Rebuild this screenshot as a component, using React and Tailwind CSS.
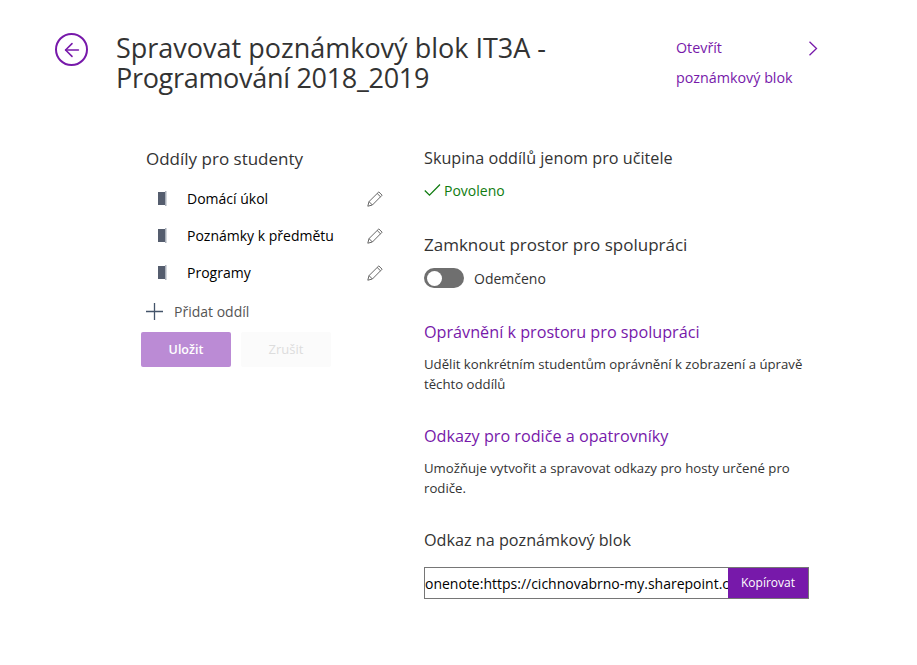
import { ArrowLeft } from 'lucide-react';

const sections = ['Domácí úkol', 'Poznámky k předmětu', 'Programy'];

function SectionIcon() {
  return (
    <svg width="9" height="15" viewBox="0 0 9 15" className="shrink-0">
      <rect x="0" y="1" width="7" height="13" fill="#555d6e" />
      <rect x="7" y="0" width="1.5" height="15" fill="#aab0ba" />
    </svg>
  );
}

function EditIcon() {
  return (
    <svg width="16" height="16" viewBox="0 0 16 16" fill="none" stroke="#666" strokeWidth="1" className="shrink-0">
      <path d="M0.8 15.2 L2 10.6 L11.8 0.9 L15.1 4.2 L5.4 14 Z" />
      <path d="M2 10.6 L5.4 14 M10.2 2.5 L13.5 5.8" />
    </svg>
  );
}

export default function App() {
  return (
    <div className="w-[917px] h-[665px] bg-white overflow-hidden font-['Open_Sans',sans-serif] text-[#333]">
      {/* Header */}
      <div className="flex pl-[55px] pt-[33px] h-[112px]">
        <div className="w-[33px] h-[33px] rounded-full border-2 border-[#7719aa] flex items-center justify-center shrink-0">
          <ArrowLeft className="w-[22px] h-[22px] text-[#7719aa]" strokeWidth={1.7} />
        </div>
        <h1 className="ml-[28px] w-[520px] text-[27px] leading-[30px] font-normal text-[#333]">
          Spravovat poznámkový blok IT3A -<br />
          <span className="tracking-[-0.3px]">Programování 2018_2019</span>
        </h1>
        <div className="ml-[40px] w-[142px] text-[14.3px] text-[#7719aa] leading-[32px] -mt-[1px]">
          <div className="flex items-center justify-between">
            <span>Otevřít</span>
            <svg width="10" height="15" viewBox="0 0 10 15" fill="none" stroke="#7719aa" strokeWidth="1.3" className="shrink-0 -ml-[2px]">
              <path d="M1.5 0.8 L8.5 7.5 L1.5 14.2" />
            </svg>
          </div>
          <div className="-mt-[2px]">poznámkový blok</div>
        </div>
      </div>

      <div className="flex pl-[141px] pt-[35px]">
        {/* Left column */}
        <div className="w-[283px] shrink-0">
          <div className="pl-[5px] text-[17px] leading-[24px]">Oddíly pro studenty</div>
          <div className="mt-[9px] flex flex-col">
            {sections.map(name => (
              <div key={name} className="flex items-center h-[37px] pl-[17px] w-[242px]">
                <SectionIcon />
                <span className="ml-[20px] text-[14px] text-black flex-1">{name}</span>
                <EditIcon />
              </div>
            ))}
          </div>
          <div className="flex items-center pl-[5px] mt-[8px] h-[24px]">
            <svg width="17" height="17" viewBox="0 0 17 17" fill="none" stroke="#44546a" strokeWidth="1.3" className="shrink-0">
              <path d="M0 8.5 H17 M8.5 0 V17" />
            </svg>
            <span className="ml-[11px] text-[14px] text-[#555]">Přidat oddíl</span>
          </div>
          <div className="flex gap-[10px] mt-[9px]">
            <button className="w-[90px] h-[35px] pt-[2px] rounded-[2px] bg-[#bb8bd5] text-white text-[12.5px] font-semibold">Uložit</button>
            <button className="w-[90px] h-[35px] rounded-[2px] bg-[#fbfbfb] text-[#ddd] text-[13px]">Zrušit</button>
          </div>
        </div>

        {/* Right column */}
        <div className="w-[385px] -mt-[1px]">
          <div className="text-[16.2px] leading-[24px]">Skupina oddílů jenom pro učitele</div>
          <div className="flex items-center mt-[10px] h-[20px] text-[#107c10] text-[14px]">
            <svg width="17" height="14" viewBox="0 0 17 14" fill="none" stroke="#107c10" strokeWidth="1.3" className="mr-[3px] shrink-0">
              <path d="M0.8 7.5 L5.5 12.2 L16 1.5" />
            </svg>
            <span>Povoleno</span>
          </div>
          <div className="text-[17px] leading-[24px] mt-[33px]">Zamknout prostor pro spolupráci</div>
          <div className="flex items-center mt-[11px] h-[20px]">
            <div className="w-[40px] h-[20px] rounded-full bg-[#6f6f6f] flex items-center pl-[3px]">
              <div className="w-[15px] h-[15px] rounded-full bg-white" />
            </div>
            <span className="ml-[10px] text-[14px] text-[#333]">Odemčeno</span>
          </div>
          <div className="text-[16.2px] leading-[24px] text-[#7719aa] mt-[32px]">Oprávnění k prostoru pro spolupráci</div>
          <p className="text-[13.2px] leading-[20px] mt-[10px] text-[#333]">
            Udělit konkrétním studentům oprávnění k zobrazení a úpravě těchto oddílů
          </p>
          <div className="text-[16.2px] leading-[24px] text-[#7719aa] mt-[30px]">Odkazy pro rodiče a opatrovníky</div>
          <p className="text-[13.2px] leading-[20px] mt-[10px] text-[#333]">
            Umožňuje vytvořit a spravovat odkazy pro hosty určené pro rodiče.
          </p>
          <div className="text-[16.2px] leading-[24px] mt-[30px]">Odkaz na poznámkový blok</div>
          <div className="flex mt-[15px] w-[385px] h-[32px] border border-[#767676]">
            <input
              readOnly
              value="onenote:https://cichnovabrno-my.sharepoint.com/personal/notebook"
              className="flex-1 min-w-0 text-[14px] text-black outline-none bg-white"
            />
            <button className="w-[80px] bg-[#7719aa] text-white text-[12px]">Kopírovat</button>
          </div>
        </div>
      </div>
    </div>
  );
}
